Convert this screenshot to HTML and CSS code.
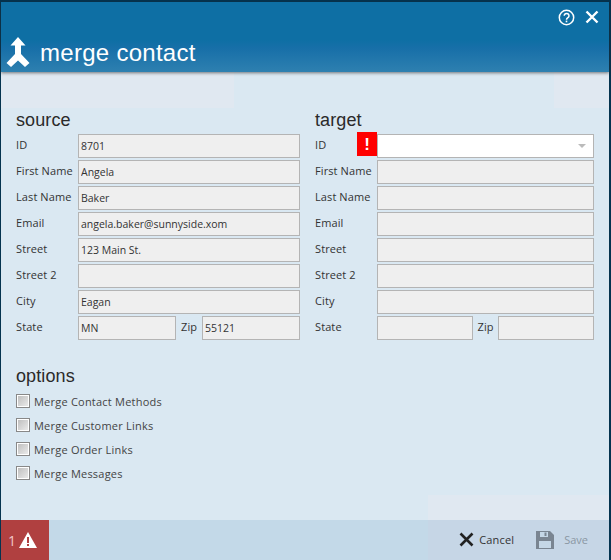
FILE: index.html
```html
<!DOCTYPE html>
<html lang="en">
<head>
<meta charset="utf-8">
<title>merge contact</title>
<link rel="stylesheet" href="styles.css">
</head>
<body>
<div class="window">
  <header class="header">
    <div class="header-tools">
      <svg class="tool-help" width="17" height="17" viewBox="0 0 17 17"><circle cx="8.5" cy="8.5" r="7.2" fill="none" stroke="#fff" stroke-width="1.5"/><path d="M6.2 6.7a2.4 2.3 0 1 1 3.7 2c-.9.6-1.4 1-1.4 2" fill="none" stroke="#fff" stroke-width="1.5"/><rect x="7.7" y="11.6" width="1.6" height="1.7" fill="#fff"/></svg>
      <svg class="tool-close" width="14" height="14" viewBox="0 0 14 14"><path d="M1.5 1.5l11 11M12.5 1.5l-11 11" stroke="#fff" stroke-width="2.4" fill="none"/></svg>
    </div>
    <div class="header-title">
      <svg class="merge-icon" width="26" height="31" viewBox="0 0 26 31"><path d="M12 0L19.500 8.500H15V17L23.500 26L19 30L12 23.500L5 30L.5 26L9 17V8.500H4.500z" fill="#fff"/></svg>
      <h1 class="title">merge contact</h1>
    </div>
  </header>
  <main class="content">
    <div class="bg-patch patch-a"></div>
    <div class="bg-patch patch-b"></div>
    <div class="bg-patch patch-c"></div>
    <div class="columns">
      <section class="col col-source">
        <h2 class="section-title">source</h2>
        <div class="row"><label class="lbl">ID</label><input class="field" disabled value="8701"></div>
        <div class="row"><label class="lbl">First Name</label><input class="field" disabled value="Angela"></div>
        <div class="row"><label class="lbl">Last Name</label><input class="field" disabled value="Baker"></div>
        <div class="row"><label class="lbl">Email</label><input class="field" disabled value="angela.baker@sunnyside.xom"></div>
        <div class="row"><label class="lbl">Street</label><input class="field" disabled value="123 Main St."></div>
        <div class="row"><label class="lbl">Street 2</label><input class="field" disabled></div>
        <div class="row"><label class="lbl">City</label><input class="field" disabled value="Eagan"></div>
        <div class="row"><label class="lbl">State</label><input class="field state" disabled value="MN"><label class="lbl-zip">Zip</label><input class="field zip" disabled value="55121"></div>
      </section>
      <section class="col col-target">
        <h2 class="section-title">target</h2>
        <div class="row"><label class="lbl">ID</label>
          <div class="combo"><span class="alert-flag">!</span><input class="field field-active"><span class="caret"></span></div>
        </div>
        <div class="row"><label class="lbl">First Name</label><input class="field" disabled></div>
        <div class="row"><label class="lbl">Last Name</label><input class="field" disabled></div>
        <div class="row"><label class="lbl">Email</label><input class="field" disabled></div>
        <div class="row"><label class="lbl">Street</label><input class="field" disabled></div>
        <div class="row"><label class="lbl">Street 2</label><input class="field" disabled></div>
        <div class="row"><label class="lbl">City</label><input class="field" disabled></div>
        <div class="row"><label class="lbl">State</label><input class="field state-t" disabled><label class="lbl-zip lbl-zip-t">Zip</label><input class="field zip-t" disabled></div>
      </section>
    </div>
    <section class="options">
      <h2 class="section-title">options</h2>
      <label class="check"><span class="box"></span>Merge Contact Methods</label>
      <label class="check"><span class="box"></span>Merge Customer Links</label>
      <label class="check"><span class="box"></span>Merge Order Links</label>
      <label class="check"><span class="box"></span>Merge Messages</label>
    </section>
  </main>
  <footer class="footer">
    <div class="error-badge"><span class="error-count">1</span>
      <svg width="18" height="16" viewBox="0 0 18 16"><path d="M9 0l9 16H0z" fill="#fff"/><rect x="8" y="5" width="2" height="6" fill="#b04040"/><rect x="8" y="12" width="2" height="2" fill="#b04040"/></svg>
    </div>
    <div class="actions">
      <button class="btn btn-cancel"><svg width="15" height="15" viewBox="0 0 15 15"><path d="M1.500 1.500l12 12M13.500 1.500l-12 12" stroke="#222" stroke-width="2.600" fill="none"/></svg>Cancel</button>
      <button class="btn btn-disabled"><svg width="18" height="18" viewBox="0 0 18 18"><path d="M0 0h14l4 4v14H0z" fill="#7a8591"/><rect x="4" y="1" width="8" height="5" fill="#c5d7e6"/><rect x="8.500" y="1.500" width="2" height="3.500" fill="#7a8591"/><rect x="3" y="10" width="12" height="7" fill="#c5d7e6"/></svg>Save</button>
    </div>
  </footer>
</div>
</body>
</html>
```
FILE: styles.css
```css
* { box-sizing: border-box; }
html, body { margin: 0; padding: 0; }
body { width: 611px; height: 560px; overflow: hidden; background: #04334f; font-family: "Open Sans", "Noto Sans", sans-serif; }
.window { width: 608px; height: 560px; margin-left: 1px; padding-top: 2px; display: flex; flex-direction: column; }
.header { height: 70px; flex: none; position: relative; z-index: 1; background: linear-gradient(#0e6fa4 0, #0e6fa4 38px, #176fa8 46px, #2e80b0 70px); box-shadow: 0 1px 3px rgba(40,40,40,.6); display: flex; flex-direction: column; padding: 6px 10px 0 5px; }
.header-tools { height: 18px; display: flex; justify-content: flex-end; align-items: center; gap: 10px; }
.header-title { display: flex; align-items: center; gap: 8px; margin-top: 11px; }
.title { margin: 0; font: 400 24px/30px "Liberation Sans", Arial, sans-serif; color: #fff; letter-spacing: .28px; }
.content { flex: 1; position: relative; padding: 37px 14px 0 15px; background: #dae8f2; overflow: hidden; }
.bg-patch { position: absolute; }
.patch-a { left: 0; top: 0; width: 233px; height: 36px; background: #e0e8f1; }
.patch-b { right: 0; top: 0; width: 55px; height: 36px; background: #e0e8f1; }
.patch-c { right: 0; bottom: 0; width: 181px; height: 25px; background: #e0e8f1; }
.columns { position: relative; display: flex; gap: 15px; }
.col-source { width: 284px; }
.col-target { width: 279px; }
.section-title { margin: 0; font: 400 18px/22px "Liberation Sans", Arial, sans-serif; color: #2a2a2a; height: 25px; letter-spacing: .1px; }
.row { display: flex; align-items: center; height: 24px; margin-bottom: 2px; }
.lbl { width: 62px; flex: none; font-size: 11px; color: #333; position: relative; top: -2px; letter-spacing: .1px; }
.lbl-zip { flex: none; width: 26px; text-align: center; font-size: 11px; color: #333; position: relative; top: -2px; }
.lbl-zip-t { width: 25px; }
.field { flex: 1; min-width: 0; height: 24px; border: 1px solid #b4b4b4; background: #efefef; padding: 0 2px; font: 10.5px "Open Sans", "Noto Sans", sans-serif; color: #333; border-radius: 0; outline: none; opacity: 1; -webkit-text-fill-color: #333; }
.state { flex: none; width: 98px; }
.zip { flex: none; width: 98px; }
.state-t { flex: none; width: 96px; }
.zip-t { flex: none; width: 96px; }
.combo { flex: 1; display: flex; position: relative; height: 24px; margin-left: -20px; }
.alert-flag { width: 20px; height: 24px; margin-top: -2px; flex: none; background: #ff0000; color: #fff; font: 700 17px/25px "Liberation Sans", Arial, sans-serif; text-align: center; }
.field-active { background: #fff; }
.caret { position: absolute; right: 8px; top: 10px; border: 4px solid transparent; border-top: 4px solid #bbb; border-bottom: 0; }
.options { position: relative; margin-top: 23px; }
.options .section-title { margin-bottom: -1px; }
.check { display: flex; align-items: center; height: 24px; font-size: 11px; color: #444; gap: 4px; letter-spacing: .22px; }
.box { width: 14px; height: 14px; border: 1px solid #888; background: linear-gradient(135deg, #bbb, #eee); box-shadow: inset 0 0 0 1px #fff; }
.footer { height: 40px; flex: none; background: linear-gradient(to right, #c3d9e8 427px, #c6d6e6 427px); display: flex; justify-content: space-between; align-items: stretch; }
.error-badge { width: 48px; background: #b04040; display: flex; align-items: center; gap: 3px; padding-left: 7px; color: #f3c8c8; font-size: 14px; }
.actions { display: flex; align-items: center; gap: 22px; padding-right: 21px; }
.btn { display: flex; align-items: center; gap: 10px; background: none; border: 0; padding: 0 0 1px; font: 11px "Open Sans", "Noto Sans", sans-serif; color: #333; }
.btn svg { flex: none; }
.btn-cancel { gap: 5px; letter-spacing: .15px; }
.btn-disabled { color: #8a97a3; }
```
